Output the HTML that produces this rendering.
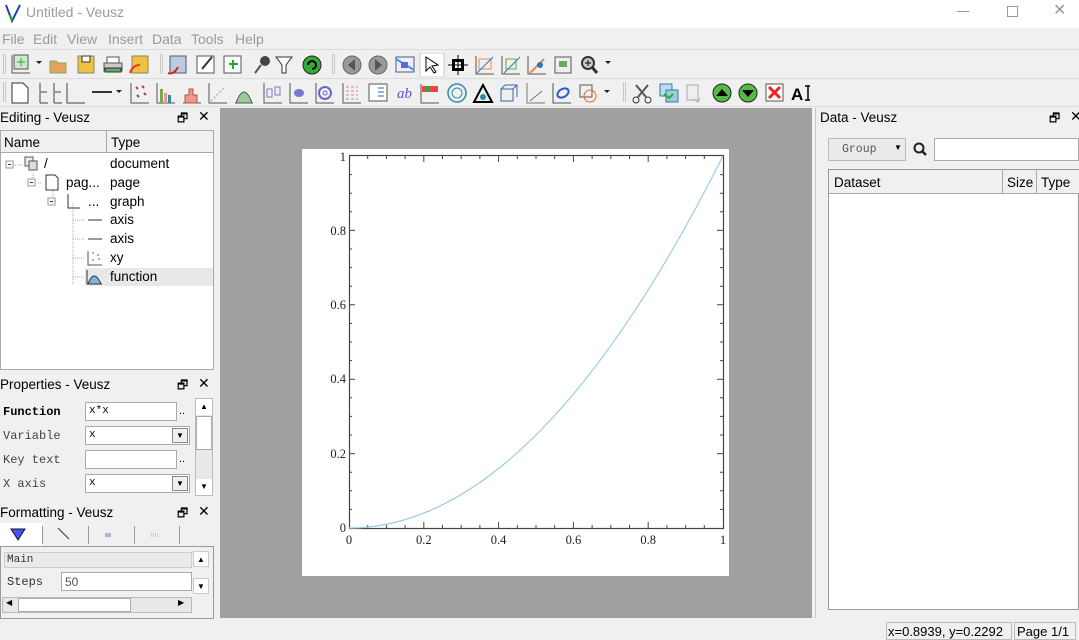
<!DOCTYPE html>
<html><head><meta charset="utf-8"><style>
*{margin:0;padding:0;box-sizing:border-box}
body{width:1079px;height:638px;overflow:hidden;background:#f0f0f0;font-family:"Liberation Sans","DejaVu Sans",sans-serif;font-size:13.5px;color:#000;position:relative}
.a{position:absolute}
.mono{font-family:"Liberation Mono","DejaVu Sans Mono",monospace;font-size:12px}
.sep{position:absolute;width:3px;border-left:1px solid #c8c8c8;border-right:1px solid #c8c8c8}
.m{position:absolute;top:31px;color:#9a9a9a;font-size:14px}
</style></head><body>
<div class="a" style="left:0;top:0;width:1079px;height:28px;background:#fff"></div>
<svg class="a" style="left:4px;top:3px" width="18" height="20"><path d="M2 2 L8 18 L16 2" fill="none" stroke="#2244aa" stroke-width="2"/><path d="M6 12 L8 18" stroke="#22aa22" stroke-width="2"/></svg>
<div class="a" style="left:26px;top:4px;font-size:14px;color:#9a9a9a">Untitled - Veusz</div>
<div class="a" style="left:957px;top:11px;width:12px;height:1px;background:#999"></div>
<div class="a" style="left:1007px;top:6px;width:11px;height:11px;border:1px solid #999"></div>
<div class="a" style="left:1053px;top:0px;font-size:16px;color:#999">✕</div>
<div class="m" style="left:2px">File</div><div class="m" style="left:33px">Edit</div><div class="m" style="left:67px">View</div><div class="m" style="left:108px">Insert</div><div class="m" style="left:152px">Data</div><div class="m" style="left:191px">Tools</div><div class="m" style="left:235px">Help</div>
<div class="a" style="left:0;top:49px;width:1079px;height:1px;background:#dcdcdc"></div>
<div class="a" style="left:0;top:78px;width:1079px;height:1px;background:#dcdcdc"></div>
<div class="a" style="left:0;top:106px;width:1079px;height:1px;background:#dcdcdc"></div>
<div class="sep" style="left:3px;top:54px;height:20px"></div>
<svg class="a" style="left:10px;top:53px" width="620" height="24">
<g fill="none" stroke="#333">
<rect x="4" y="2" width="14" height="14" fill="#cfe8cf" stroke="#555"/><path d="M11 5v8M7 9h8" stroke="#2a2"/><path d="M2 2v18h18" stroke="#555"/>
<path d="M26 8l3 3 3-3" fill="#222" stroke="none"/>
<path d="M40 8h6l2 2h8v10h-16z" fill="#e8a060" stroke="#8a5"/>
<rect x="68" y="3" width="16" height="17" fill="#f0c040" stroke="#886"/><rect x="72" y="3" width="8" height="6" fill="#fff"/>
<rect x="94" y="10" width="18" height="8" fill="#ccc" stroke="#555"/><rect x="97" y="4" width="12" height="6" fill="#fff" stroke="#555"/><rect x="95" y="15" width="16" height="4" fill="#6a6"/>
<rect x="122" y="3" width="16" height="17" fill="#f0c040" stroke="#886"/><path d="M120 20c2-6 6-8 10-8" stroke="#e33" stroke-width="2"/>
<rect x="160" y="3" width="16" height="17" fill="#bcd" stroke="#557"/><path d="M158 20c4 2 8-2 10-6" stroke="#d22" stroke-width="2"/>
<rect x="187" y="3" width="17" height="17" fill="#fff" stroke="#555"/><path d="M192 16l10-12" stroke="#333" stroke-width="2"/>
<rect x="214" y="3" width="17" height="17" fill="#fff" stroke="#555"/><path d="M223 7v9M219 11h9" stroke="#2a2" stroke-width="2"/>
<circle cx="255" cy="8" r="5" fill="#444" stroke="none"/><path d="M251 12l-6 8" stroke="#555" stroke-width="2"/>
<path d="M266 4h16l-6 8v8h-4v-8z" fill="#fff" stroke="#333"/>
<circle cx="302" cy="12" r="9" fill="#3a3" stroke="#222"/><path d="M298 12a4 4 0 1 1 4 4" stroke="#000" stroke-width="2"/>
<circle cx="342" cy="12" r="9" fill="#999" stroke="#666"/><path d="M345 6v12l-7-6z" fill="#555" stroke="none"/>
<circle cx="368" cy="12" r="9" fill="#999" stroke="#666"/><path d="M365 6v12l7-6z" fill="#555" stroke="none"/>
<rect x="386" y="4" width="18" height="15" fill="#eef" stroke="#557"/><path d="M386 6l18 11" stroke="#39f" stroke-width="2"/><rect x="391" y="9" width="7" height="6" fill="#66c" stroke="none"/>
<rect x="410" y="0" width="24" height="24" fill="#fff" stroke="#ccc"/><path d="M416 4l12 8-6 1 4 6-2 1-4-6-4 4z" fill="#fff" stroke="#000"/>
<rect x="442" y="6" width="12" height="12" fill="#000" stroke="none"/><rect x="445" y="9" width="6" height="6" fill="#fff" stroke="none"/><path d="M438 12h20M448 2v20" stroke="#000"/>
<path d="M466 3v18h18" stroke="#555"/><rect x="469" y="6" width="12" height="10" stroke="#e84"/><path d="M467 20l16-16" stroke="#27c"/>
<path d="M492 3v18h18" stroke="#555"/><rect x="496" y="6" width="10" height="10" stroke="#6a3"/><path d="M494 20l16-16" stroke="#27c"/>
<path d="M518 3v18h18" stroke="#555"/><path d="M520 20l14-14" stroke="#e84" stroke-width="2"/><circle cx="530" cy="12" r="3" fill="#27c" stroke="none"/>
<rect x="545" y="4" width="16" height="16" fill="#eee" stroke="#555"/><rect x="549" y="8" width="8" height="6" fill="#6a6" stroke="none"/>
<circle cx="578" cy="10" r="6" fill="#ccc" stroke="#333" stroke-width="2"/><path d="M582 14l5 6" stroke="#333" stroke-width="3"/><path d="M575 10h6M578 7v6" stroke="#000"/>
<path d="M595 8l3 3 3-3" fill="#222" stroke="none"/>
</g></svg>
<div class="sep" style="left:160px;top:54px;height:20px"></div>
<div class="sep" style="left:332px;top:54px;height:20px"></div>
<div class="sep" style="left:3px;top:82px;height:20px"></div>
<svg class="a" style="left:10px;top:81px" width="800" height="24">
<g fill="none" stroke="#333">
<path d="M2 2h11l5 5v15h-16z" fill="#fff"/>
<path d="M30 2v9h7M44 2v9h7M30 12v10M30 22h8M44 12v10M44 22h8" stroke="#444"/>
<path d="M57 2v20h18" stroke="#444"/>
<path d="M82 11h20" stroke="#333" stroke-width="2"/><path d="M106 9l3 3 3-3" fill="#222" stroke="none"/>
<path d="M121 2v20h18" stroke="#555"/><path d="M126 6l2 2M132 5l2 2M127 14l2 2M134 12l2 2" stroke="#a44" stroke-width="2"/>
<path d="M147 2v20h18" stroke="#555"/><rect x="150" y="8" width="3" height="14" fill="#7a5" stroke="none"/><rect x="154" y="12" width="3" height="10" fill="#e99" stroke="none"/><rect x="158" y="14" width="3" height="8" fill="#38a" stroke="none"/>
<path d="M173 22h18" stroke="#555"/><path d="M175 22v-8h4v-6h4v6h4v8z" fill="#e98" stroke="#a55"/>
<path d="M199 2v20h18" stroke="#555"/><path d="M201 20l14-14" stroke="#a8c" stroke-dasharray="2 2"/>
<path d="M225 22h18" stroke="#555"/><path d="M226 22q8-22 16 0z" fill="#9c9" stroke="#555"/>
<path d="M254 2v20h18" stroke="#555"/><rect x="257" y="8" width="5" height="8" stroke="#77c"/><rect x="265" y="6" width="5" height="8" stroke="#77c"/>
<path d="M280 2v20h18" stroke="#555"/><ellipse cx="289" cy="12" rx="5" ry="4" fill="#77c" stroke="none"/>
<path d="M306 2v20h18" stroke="#555"/><circle cx="315" cy="12" r="6" stroke="#66c" stroke-width="2"/><circle cx="315" cy="12" r="2" stroke="#66c"/>
<path d="M333 2v20h18" stroke="#555"/><path d="M336 6h12M336 10h12M336 14h12M336 18h12" stroke="#d88" stroke-dasharray="3 2"/>
<rect x="359" y="3" width="18" height="17" fill="#fff" stroke="#555"/><path d="M368 7h6M368 11h6M368 15h6" stroke="#36a"/>
<text x="387" y="17" font-family="Liberation Serif" font-style="italic" font-size="15" fill="#55c" stroke="none">ab</text>
<rect x="412" y="5" width="16" height="6" fill="#e44" stroke="none"/><rect x="416" y="5" width="4" height="6" fill="#3a3" stroke="none"/><path d="M411 3v19h18" stroke="#555"/>
<circle cx="447" cy="12" r="9" stroke="#38a" stroke-width="1.5"/><circle cx="447" cy="12" r="5" stroke="#38a"/>
<path d="M464 21l9-17 9 17z" stroke="#000" stroke-width="2"/><circle cx="473" cy="16" r="3" fill="#38a" stroke="none"/>
<path d="M491 8h12v12h-12zM495 4h12v12M491 8l4-4M503 8l4-4" stroke="#36a"/>
<path d="M517 2v20h18" stroke="#777"/><path d="M520 20l12-10" stroke="#777"/>
<path d="M543 2v20h18" stroke="#555"/><ellipse cx="553" cy="12" rx="6" ry="4" stroke="#35c" stroke-width="2" transform="rotate(-30 553 12)"/>
<rect x="570" y="4" width="12" height="12" stroke="#555"/><circle cx="580" cy="15" r="6" stroke="#e62"/><path d="M594 9l3 3 3-3" fill="#222" stroke="none"/>
<path d="M626 4l10 12M638 4l-10 12" stroke="#555" stroke-width="2"/><circle cx="626" cy="19" r="3" stroke="#333"/><circle cx="638" cy="19" r="3" stroke="#333"/>
<rect x="650" y="3" width="12" height="12" fill="#bde" stroke="#37a"/><rect x="656" y="9" width="12" height="12" fill="#9cd" stroke="#37a"/><path d="M654 13l5 4 4-4" stroke="#3a3" stroke-width="2"/>
<rect x="677" y="4" width="11" height="15" fill="#eee" stroke="#aaa"/><path d="M683 18l5 3 2-4" stroke="#aaa"/>
<circle cx="712" cy="12" r="9" fill="#5b4" stroke="#222"/><path d="M706 15l6-7 6 7z" fill="#000" stroke="none"/>
<circle cx="738" cy="12" r="9" fill="#5b4" stroke="#222"/><path d="M732 9l6 7 6-7z" fill="#000" stroke="none"/>
<rect x="756" y="3" width="17" height="17" fill="#fff" stroke="#555"/><path d="M759 6l11 11M770 6l-11 11" stroke="#e22" stroke-width="3"/>
<text x="781" y="19" font-size="17" font-weight="bold" fill="#000" stroke="none">A</text><path d="M795 5h6M798 5v14M795 19h6" stroke="#000" stroke-width="1.5"/>
</g></svg>
<div class="sep" style="left:623px;top:82px;height:20px"></div>
<div class="a" style="left:0;top:110px">Editing - Veusz</div>
<div class="a" style="left:177px;top:109px;font-size:12px">🗗</div><div class="a" style="left:198px;top:108px;font-size:14px">✕</div>
<div class="a" style="left:0;top:130px;width:214px;height:240px;background:#fff;border:1px solid #aaa"></div>
<div class="a" style="left:1px;top:131px;width:212px;height:22px;background:#f0f0f0;border-bottom:1px solid #aaa"></div>
<div class="a" style="left:106px;top:131px;width:1px;height:22px;background:#aaa"></div>
<div class="a" style="left:4px;top:135px">Name</div><div class="a" style="left:111px;top:135px">Type</div>
<div class="a" style="left:85px;top:268px;width:128px;height:18px;background:#e8e8e8"></div>
<svg class="a" style="left:0;top:153px" width="110" height="135"><g fill="none" stroke="#aaa" stroke-dasharray="1 1">
<path d="M13 12h10M33 20v10M41 30h-4M53 38v10h4M73 50v82M73 67h12M73 86h12M73 105h12M73 124h12"/></g>
<g fill="none" stroke="#999"><rect x="6" y="8" width="7" height="7" fill="#fff"/><rect x="28" y="26" width="7" height="7" fill="#fff"/><rect x="48" y="45" width="7" height="7" fill="#fff"/></g>
<path d="M8 11.5h3M30 29.5h3M50 48.5h3" stroke="#333"/>
<rect x="25" y="4" width="8" height="9" fill="#eee" stroke="#555"/><rect x="29" y="8" width="8" height="9" fill="#ddd" stroke="#555"/>
<path d="M46 22h9l3 3v12h-12z" fill="#fff" stroke="#333"/>
<path d="M68 41v14h12" fill="none" stroke="#333"/>
<path d="M88 67h14M88 86h14" stroke="#333"/>
<path d="M88 98v14h14" fill="none" stroke="#555"/><path d="M92 100h2M97 102h2M92 107h2M98 106h2" stroke="#a44"/>
<path d="M87 131v-14M87 131h15M88 131q6-16 13 0z" fill="#7ab7dd" stroke="#333"/>
</svg>
<div class="a" style="left:44px;top:156px">/</div><div class="a" style="left:110px;top:156px">document</div>
<div class="a" style="left:66px;top:175px">pag...</div><div class="a" style="left:110px;top:175px">page</div>
<div class="a" style="left:88px;top:194px">...</div><div class="a" style="left:110px;top:194px">graph</div>
<div class="a" style="left:110px;top:212px">axis</div>
<div class="a" style="left:110px;top:231px">axis</div>
<div class="a" style="left:110px;top:250px">xy</div>
<div class="a" style="left:110px;top:269px">function</div>
<div class="a" style="left:0;top:377px">Properties - Veusz</div>
<div class="a" style="left:177px;top:376px;font-size:12px">🗗</div><div class="a" style="left:198px;top:375px;font-size:14px">✕</div>
<div class="mono a" style="left:3px;top:405px;font-weight:bold">Function</div>
<div class="mono a" style="left:3px;top:429px;color:#444">Variable</div>
<div class="mono a" style="left:3px;top:453px;color:#444">Key text</div>
<div class="mono a" style="left:3px;top:477px;color:#444">X axis</div>
<div class="a" style="left:85px;top:402px;width:92px;height:19px;background:#fff;border:1px solid #aaa"></div>
<div class="mono a" style="left:89px;top:405px;font-size:11px">x*x</div><div class="a" style="left:179px;top:405px;font-size:11px">..</div>
<div class="a" style="left:85px;top:426px;width:105px;height:19px;background:#fff;border:1px solid #aaa"></div>
<div class="mono a" style="left:89px;top:429px;font-size:11px">x</div>
<div class="a" style="left:172px;top:428px;width:16px;height:15px;background:#f0f0f0;border:1px solid #888;font-size:8px;text-align:center;line-height:14px">▼</div>
<div class="a" style="left:85px;top:450px;width:92px;height:19px;background:#fff;border:1px solid #aaa"></div><div class="a" style="left:179px;top:453px;font-size:11px">..</div>
<div class="a" style="left:85px;top:474px;width:105px;height:19px;background:#fff;border:1px solid #aaa"></div>
<div class="mono a" style="left:89px;top:477px;font-size:11px">x</div>
<div class="a" style="left:172px;top:476px;width:16px;height:15px;background:#f0f0f0;border:1px solid #888;font-size:8px;text-align:center;line-height:14px">▼</div>
<div class="a" style="left:195px;top:398px;width:18px;height:98px;background:#e8e8e8;border:1px solid #bbb"></div>
<div class="a" style="left:196px;top:399px;width:16px;height:16px;background:#fff;font-size:8px;text-align:center;line-height:16px">▲</div>
<div class="a" style="left:196px;top:416px;width:16px;height:34px;background:#fff;border:1px solid #aaa"></div>
<div class="a" style="left:196px;top:479px;width:16px;height:16px;background:#fff;font-size:8px;text-align:center;line-height:16px">▼</div>
<div class="a" style="left:0;top:505px">Formatting - Veusz</div>
<div class="a" style="left:177px;top:504px;font-size:12px">🗗</div><div class="a" style="left:198px;top:503px;font-size:14px">✕</div>
<div class="a" style="left:0;top:523px;width:42px;height:23px;background:#fff"></div>
<div class="a" style="left:42px;top:526px;width:1px;height:18px;background:#999"></div>
<div class="a" style="left:88px;top:526px;width:1px;height:18px;background:#999"></div>
<div class="a" style="left:134px;top:526px;width:1px;height:18px;background:#999"></div>
<div class="a" style="left:179px;top:526px;width:1px;height:18px;background:#999"></div>
<svg class="a" style="left:0;top:523px" width="180" height="22"><path d="M11 6h14l-7 11z" fill="#4455ee" stroke="#112"/><path d="M58 5l11 11" stroke="#333"/><path d="M105 11h6M105 13h6" stroke="#77a"/><path d="M151 11h7M151 13h7" stroke="#b9c" stroke-dasharray="1 1"/></svg>
<div class="a" style="left:0;top:546px;width:214px;height:73px;border:1px solid #999;background:#f0f0f0"></div>
<div class="a" style="left:4px;top:552px;width:188px;height:16px;background:#eaeaea;border:1px solid #ccc"></div>
<div class="mono a" style="left:7px;top:554px;font-size:11px;color:#333">Main</div>
<div class="a" style="left:7px;top:575px;font-size:12px;color:#333;font-family:'Liberation Mono',monospace">Steps</div>
<div class="a" style="left:61px;top:572px;width:131px;height:19px;background:#fff;border:1px solid #aaa"></div>
<div class="a" style="left:65px;top:575px;font-size:12px;color:#555">50</div>
<div class="a" style="left:193px;top:551px;width:16px;height:16px;background:#fff;font-size:8px;text-align:center;line-height:16px;border:1px solid #ccc">▲</div>
<div class="a" style="left:193px;top:578px;width:16px;height:16px;background:#fff;font-size:8px;text-align:center;line-height:16px;border:1px solid #ccc">▼</div>
<div class="a" style="left:2px;top:597px;width:190px;height:16px;background:#e8e8e8;border:1px solid #bbb"></div>
<div class="a" style="left:18px;top:598px;width:113px;height:14px;background:#fff;border:1px solid #aaa"></div>
<div class="a" style="left:6px;top:598px;font-size:8px">◀</div><div class="a" style="left:178px;top:598px;font-size:8px">▶</div>
<div class="a" style="left:220px;top:108px;width:592px;height:510px;background:#a0a0a0"></div>
<div class="a" style="left:302px;top:149px;width:427px;height:427px;background:#fff"></div>
<svg class="a" style="left:0;top:0" width="1079" height="638">
<rect x="349.5" y="155.5" width="374" height="373" fill="none" stroke="#444" stroke-width="1.2"/>
<g stroke="#444" fill="none">
<path d="M423.8 528v-6M498.6 528v-6M573.4 528v-6M648.2 528v-6M423.8 156v6M498.6 156v6M573.4 156v6M648.2 156v6
M349 453.6h6M349 379.2h6M349 304.8h6M349 230.4h6M723 453.6h-6M723 379.2h-6M723 304.8h-6M723 230.4h-6"/>
<path d="M367.7 528v-3M386.4 528v-3M405.1 528v-3M442.5 528v-3M461.2 528v-3M479.9 528v-3M517.3 528v-3M536 528v-3M554.7 528v-3M592.1 528v-3M610.8 528v-3M629.5 528v-3M666.9 528v-3M685.6 528v-3M704.3 528v-3
M367.7 156v3M386.4 156v3M405.1 156v3M442.5 156v3M461.2 156v3M479.9 156v3M517.3 156v3M536 156v3M554.7 156v3M592.1 156v3M610.8 156v3M629.5 156v3M666.9 156v3M685.6 156v3M704.3 156v3
M349 509.4h3M349 490.8h3M349 472.2h3M349 435h3M349 416.4h3M349 397.8h3M349 360.6h3M349 342h3M349 323.4h3M349 286.2h3M349 267.6h3M349 249h3M349 211.8h3M349 193.2h3M349 174.6h3
M723 509.4h-3M723 490.8h-3M723 472.2h-3M723 435h-3M723 416.4h-3M723 397.8h-3M723 360.6h-3M723 342h-3M723 323.4h-3M723 286.2h-3M723 267.6h-3M723 249h-3M723 211.8h-3M723 193.2h-3M723 174.6h-3"/>
</g>
<path d="M349 528Q536 528 723 156" fill="none" stroke="#9ccbe6" stroke-width="1.2"/>
<g font-family="Liberation Serif" font-size="12.5" fill="#222">
<text x="349" y="544" text-anchor="middle">0</text><text x="423.8" y="544" text-anchor="middle">0.2</text><text x="498.6" y="544" text-anchor="middle">0.4</text><text x="573.4" y="544" text-anchor="middle">0.6</text><text x="648.2" y="544" text-anchor="middle">0.8</text><text x="723" y="544" text-anchor="middle">1</text>
<text x="346" y="532" text-anchor="end">0</text><text x="346" y="458" text-anchor="end">0.2</text><text x="346" y="383" text-anchor="end">0.4</text><text x="346" y="309" text-anchor="end">0.6</text><text x="346" y="235" text-anchor="end">0.8</text><text x="346" y="161" text-anchor="end">1</text>
</g></svg>
<div class="a" style="left:815px;top:108px;width:1px;height:510px;background:#c8c8c8"></div>
<div class="a" style="left:820px;top:110px">Data - Veusz</div>
<div class="a" style="left:1049px;top:109px;font-size:12px">🗗</div><div class="a" style="left:1070px;top:108px;font-size:14px">✕</div>
<div class="a" style="left:828px;top:138px;width:78px;height:23px;background:#eaeaea;border:1px solid #bbb"></div>
<div class="mono a" style="left:842px;top:143px;font-size:11.5px;color:#555">Group</div>
<div class="a" style="left:894px;top:143px;font-size:8px">▼</div>
<svg class="a" style="left:912px;top:141px" width="16" height="16"><circle cx="7" cy="7" r="4.5" fill="none" stroke="#222" stroke-width="2"/><path d="M10 10l4 4" stroke="#222" stroke-width="2.5"/></svg>
<div class="a" style="left:934px;top:138px;width:145px;height:23px;background:#fff;border:1px solid #aaa"></div>
<div class="a" style="left:828px;top:169px;width:251px;height:441px;background:#fff;border:1px solid #999"></div>
<div class="a" style="left:829px;top:170px;width:250px;height:24px;background:#f0f0f0;border-bottom:1px solid #aaa"></div>
<div class="a" style="left:1002px;top:170px;width:1px;height:24px;background:#aaa"></div>
<div class="a" style="left:1036px;top:170px;width:1px;height:24px;background:#aaa"></div>
<div class="a" style="left:834px;top:175px">Dataset</div><div class="a" style="left:1007px;top:175px">Size</div><div class="a" style="left:1041px;top:175px">Type</div>
<div class="a" style="left:886px;top:622px;width:126px;height:18px;border:1px solid #bbb"></div>
<div class="a" style="left:888px;top:624px;font-size:13px">x=0.8939, y=0.2292</div>
<div class="a" style="left:1014px;top:622px;width:62px;height:18px;border:1px solid #bbb"></div>
<div class="a" style="left:1017px;top:624px;font-size:13px">Page 1/1</div>
</body></html>
